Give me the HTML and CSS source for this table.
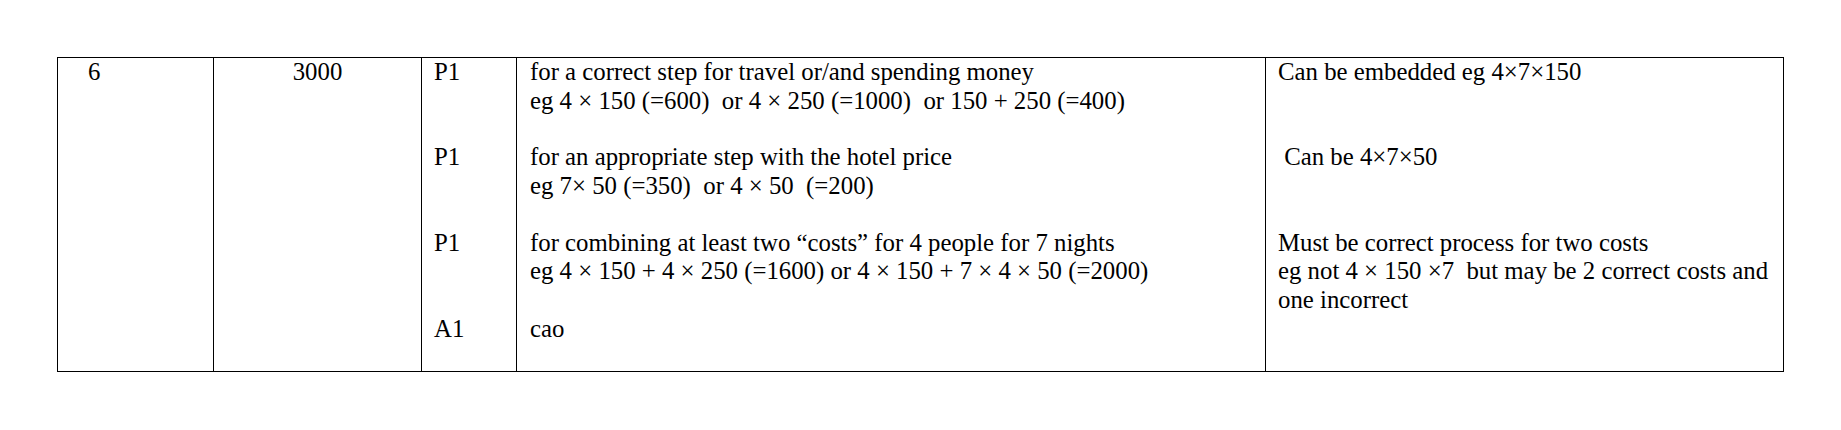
FILE: index.html
```html
<!DOCTYPE html>
<html>
<head>
<meta charset="utf-8">
<link rel="stylesheet" href="styles.css">
</head>
<body>
<table class="scheme">
  <colgroup>
    <col class="w-q">
    <col class="w-ans">
    <col class="w-mark">
    <col class="w-method">
    <col class="w-notes">
  </colgroup>
  <tr class="r3">
    <td class="q" rowspan="4">6</td>
    <td class="ans" rowspan="4">3000</td>
    <td class="mark">P1</td>
    <td class="txt">for a correct step for travel or/and spending money<br>eg 4 × 150 (=600)  or 4 × 250 (=1000)  or 150 + 250 (=400)</td>
    <td class="txt note">Can be embedded eg 4×7×150</td>
  </tr>
  <tr class="r3">
    <td class="mark">P1</td>
    <td class="txt">for an appropriate step with the hotel price<br>eg 7× 50 (=350)  or 4 × 50  (=200)</td>
    <td class="txt note"> Can be 4×7×50</td>
  </tr>
  <tr class="r3">
    <td class="mark">P1</td>
    <td class="txt">for combining at least two “costs” for 4 people for 7 nights<br>eg 4 × 150 + 4 × 250 (=1600) or 4 × 150 + 7 × 4 × 50 (=2000)</td>
    <td class="txt note">Must be correct process for two costs<br>eg not 4 × 150 ×7  but may be 2 correct costs and<br>one incorrect</td>
  </tr>
  <tr class="r2">
    <td class="mark">A1</td>
    <td class="txt">cao</td>
    <td class="txt note"></td>
  </tr>
</table>
</body>
</html>
```

FILE: styles.css
```css
html, body {
  margin: 0;
  padding: 0;
  background: #ffffff;
}

body {
  font-family: "Liberation Serif", "Times New Roman", serif;
  font-size: 24.8px;
  line-height: 28.56px;
  color: #000000;
}

.scheme {
  margin: 57px 0 0 57px;
  border-collapse: collapse;
  table-layout: fixed;
  width: 1726px;
  border: 1px solid #000000;
}

.w-q { width: 156px; }
.w-ans { width: 208px; }
.w-mark { width: 95px; }
.w-method { width: 749px; }
.w-notes { width: 518px; }

.scheme td {
  vertical-align: top;
  padding: 0 13px;
  border-left: 1px solid #000000;
  border-right: 1px solid #000000;
  white-space: pre;
}

.r3 { height: 85.68px; }
.r2 { height: 57.12px; }

.q {
  padding-left: 30px !important;
  text-align: left;
}

.ans {
  text-align: center;
}

.mark {
  padding-left: 12px !important;
}

.note {
  padding-left: 12px !important;
}
```
